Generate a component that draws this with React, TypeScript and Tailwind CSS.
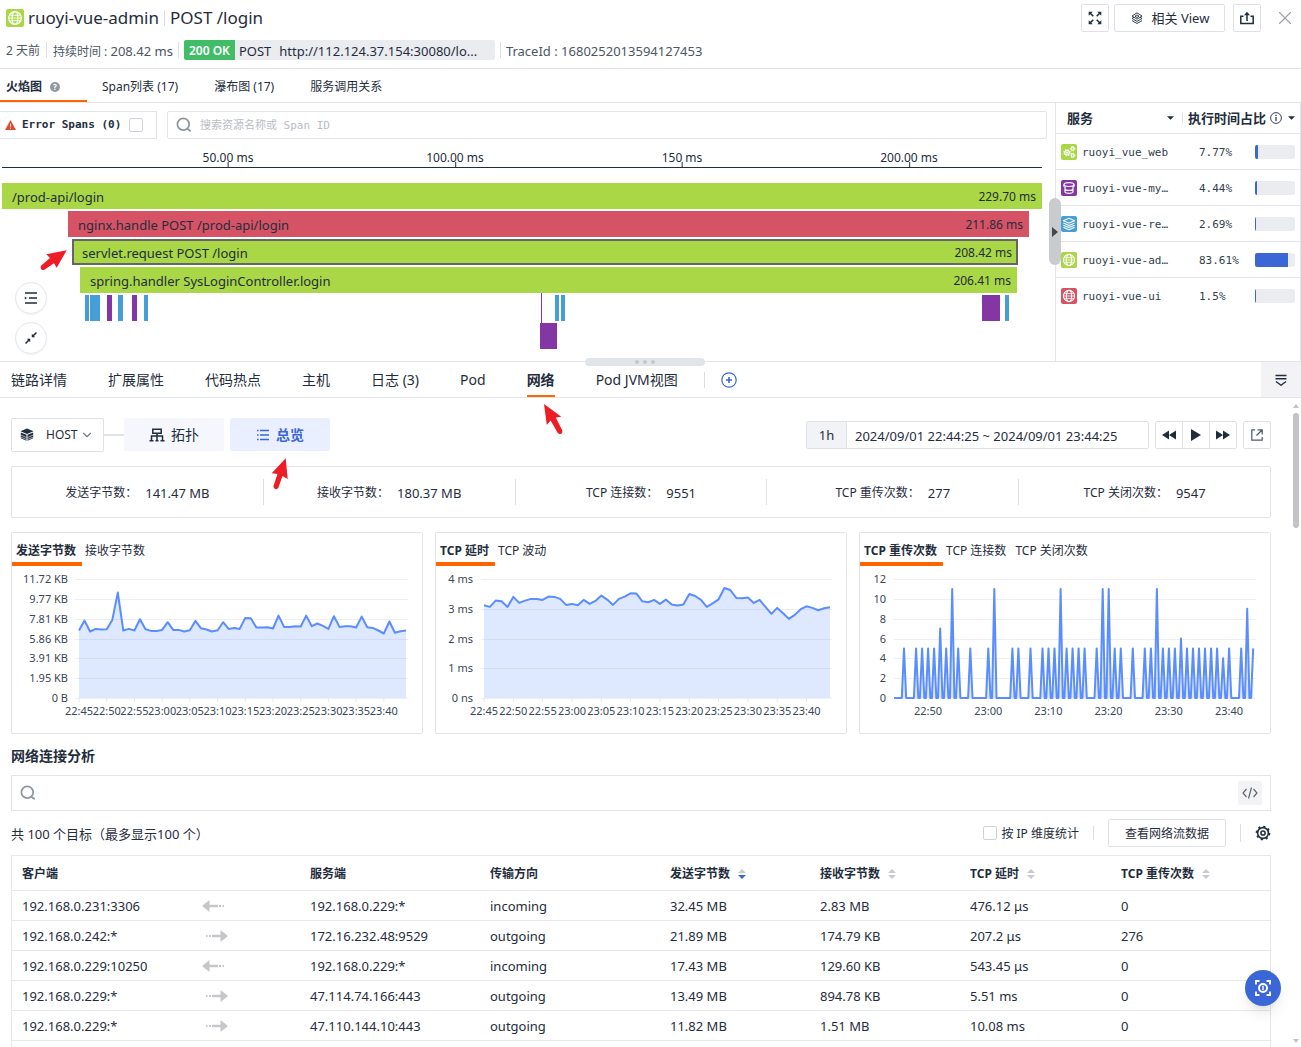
import React from "react";
import { ChevronDown, X } from "lucide-react";

type IconProps = { className?: string };

/* ---------- icons ---------- */

function GlobeIcon({ className }: IconProps) {
  return (
    <svg viewBox="0 0 16 16" className={className} fill="none" stroke="#fff" strokeWidth="1.1" aria-hidden="true">
      <circle cx="8" cy="8" r="5.6" />
      <ellipse cx="8" cy="8" rx="2.6" ry="5.6" />
      <path d="M3 5.600h10M3 10.400h10M2.400 8h11.200" strokeWidth="0.8" />
    </svg>
  );
}

function GearsIcon({ className }: IconProps) {
  return (
    <svg viewBox="0 0 16 16" className={className} fill="none" stroke="#fff" aria-hidden="true">
      <circle cx="6" cy="8.600" r="2.300" strokeWidth="1.300" />
      <circle cx="6" cy="8.600" r="3.300" strokeWidth="1" strokeDasharray="1.300 1.300" />
      <circle cx="6" cy="8.600" r="0.700" fill="#fff" />
      <circle cx="11.600" cy="4.700" r="1.500" strokeWidth="1.200" />
      <circle cx="11.600" cy="4.700" r="2.300" strokeWidth="0.700" strokeDasharray="1 1" />
      <circle cx="11.700" cy="11.400" r="1.500" strokeWidth="1.200" />
      <circle cx="11.700" cy="11.400" r="2.300" strokeWidth="0.700" strokeDasharray="1 1" />
    </svg>
  );
}

function DatabaseIcon({ className }: IconProps) {
  return (
    <svg viewBox="0 0 16 16" className={className} fill="none" stroke="#fff" strokeWidth="1.2" aria-hidden="true">
      <ellipse cx="8" cy="4.600" rx="5" ry="1.900" />
      <path d="M4 6.200v5.600c0 .9 1.800 1.500 4 1.500s4-.6 4-1.500V6.200M4 9c0 .8 1.800 1.400 4 1.400S12 9.800 12 9" />
      <path d="M3 4.600v2.200M13 4.600v2.200" />
    </svg>
  );
}

function LayersIcon({ className }: IconProps) {
  return (
    <svg viewBox="0 0 16 16" className={className} fill="none" stroke="#fff" strokeWidth="1.100" strokeLinejoin="round" aria-hidden="true">
      <path d="M8 2.300l5.600 2.400L8 7.100 2.400 4.700z" />
      <path d="M2.400 7.100L8 9.500l5.600-2.400M2.400 9.200L8 11.600l5.600-2.400M2.400 11.300L8 13.700l5.600-2.400" />
    </svg>
  );
}

function SearchIcon({ className }: IconProps) {
  return (
    <svg viewBox="0 0 16 16" className={className} fill="none" stroke="currentColor" strokeWidth="1.700" strokeLinecap="round" aria-hidden="true">
      <circle cx="7.300" cy="7.300" r="5.900" />
      <path d="M11.600 12l2.600 1.800" />
    </svg>
  );
}

function ExpandIcon() {
  return (
    <svg viewBox="0 0 14 14" className="size-3.5" fill="none" stroke="currentColor" strokeWidth="1.500" aria-hidden="true">
      <path d="M1.500 1.500L5.300 5.300M12.500 1.500L8.700 5.300M1.500 12.500L5.300 8.700M12.500 12.500L8.700 8.700" />
      <path d="M.7 4.700v-4h4zM13.300 4.700v-4h-4zM.7 9.300v4h4zM13.300 9.300v4h-4z" fill="currentColor" stroke="none" />
    </svg>
  );
}

function ViewIcon() {
  return (
    <svg viewBox="0 0 14 14" className="size-3.5" fill="none" stroke="currentColor" strokeWidth="0.900" strokeLinejoin="round" aria-hidden="true">
      <path d="M7 1.800l5 3.200-5 3.200L2 5zM4 6.200L2 7.400l5 3 5-3-2-1.200M2 9.500l5 3 5-3M5 5.200l2-1.300 2 1.300L7 6.500z" />
    </svg>
  );
}

function ShareIcon() {
  return (
    <svg viewBox="0 0 14 14" className="size-3.5" fill="none" stroke="currentColor" strokeWidth="1.500" aria-hidden="true">
      <path d="M3.500 5.200H.8v7.400h12.400V5.200h-2.700M7 10V2" />
      <path d="M4 4.200L7 .8l3 3.400z" fill="currentColor" stroke="none" />
    </svg>
  );
}

function CubeIcon() {
  return (
    <svg viewBox="0 0 14 14" className="size-3.5 shrink-0" aria-hidden="true">
      <path d="M7 .5l6.500 2.700L7 5.900.5 3.200z" fill="#1f2d3d" />
      <path d="M.8 4.400l5.700 2.400v6L.8 10.300zM13.200 4.400L7.500 6.800v6l5.700-2.500z" fill="#1f2d3d" />
      <path d="M.8 7l5.700 2.500M13.200 7L7.500 9.500M.8 9.100l5.700 2.400M13.200 9.100l-5.700 2.400" fill="none" stroke="#fff" strokeWidth="0.600" />
    </svg>
  );
}

function TopologyIcon() {
  return (
    <svg viewBox="0 0 16 14" className="h-3.5 w-4" fill="none" stroke="currentColor" strokeWidth="1.500" aria-hidden="true">
      <path d="M3.800 1.200h8.400v4H3.800zM8 5.200v7.300M2.500 12.500V8h11v4.500" />
      <path d="M.5 12.800h4M11.500 12.800h4M6.500 12.800h3" />
    </svg>
  );
}

function ListIcon() {
  return (
    <svg viewBox="0 0 14 14" className="size-3.5" fill="none" stroke="currentColor" strokeWidth="1.400" aria-hidden="true">
      <path d="M4 2.500h9M4 7h9M4 11.500h9M1 2.500h1.600M1 7h1.600M1 11.500h1.600" />
    </svg>
  );
}

function GearIcon() {
  return (
    <svg viewBox="0 0 16 16" className="size-4" fill="none" stroke="currentColor" aria-hidden="true">
      <circle cx="8" cy="8" r="5.400" strokeWidth="1.600" />
      <circle cx="8" cy="8" r="6.600" strokeWidth="1.500" strokeDasharray="2.200 2.980" />
      <circle cx="8" cy="8" r="2.100" strokeWidth="1.500" />
    </svg>
  );
}

function FocusIcon() {
  return (
    <svg viewBox="0 0 18 18" className="size-[18px]" fill="none" stroke="#fff" strokeWidth="1.800" aria-hidden="true">
      <path d="M2 5.500V2h3.500M12.500 2H16v3.500M16 12.500V16h-3.500M5.500 16H2v-3.500" />
      <circle cx="9" cy="9" r="4" strokeWidth="2" />
      <path d="M9 6.800v4.400" strokeWidth="1.400" />
    </svg>
  );
}

function FlowArrow({ incoming }: { incoming: boolean }) {
  return incoming ? (
    <svg viewBox="0 0 24 12" className="h-3 w-6" fill="#c6c7ca" role="img" aria-label="incoming">
      <path d="M0 6l7.500-6v4.800H16v2.400H7.500V12zM17 5h2v2h-2zM20.500 5H22v2h-1.500z" />
    </svg>
  ) : (
    <svg viewBox="0 0 24 12" className="ml-1 h-3 w-6" fill="#c6c7ca" role="img" aria-label="outgoing">
      <path d="M22 6l-7.500-6v4.800H6v2.400h8.500V12zM3 5h2v2H3zM0 5h1.500v2H0z" />
    </svg>
  );
}

/* ---------- data ---------- */

type Span = { row: number; start: number; width: number; tone: string; label?: string; time?: string };

/* start and width are in units of a 1040 wide time line */
const SPANS: Span[] = [
  { row: 0, start: 0, width: 1040, tone: "bg-[#aad745] pl-2.5 pr-1.5", label: "/prod-api/login", time: "229.70 ms" },
  { row: 1, start: 66, width: 961, tone: "bg-[#d65365] pl-2.5 pr-1.5", label: "nginx.handle POST /prod-api/login", time: "211.86 ms" },
  { row: 2, start: 70, width: 946, tone: "border-2 border-[#666] bg-[#aad745] pl-2 pr-1", label: "servlet.request POST /login", time: "208.42 ms" },
  { row: 3, start: 78, width: 937, tone: "bg-[#aad745] pl-2.5 pr-1.5", label: "spring.handler SysLoginController.login", time: "206.41 ms" },
  { row: 4, start: 83, width: 4, tone: "bg-[#459fd6]" },
  { row: 4, start: 88, width: 10, tone: "bg-[#459fd6]" },
  { row: 4, start: 105, width: 5, tone: "bg-[#8436a5]" },
  { row: 4, start: 116, width: 5, tone: "bg-[#459fd6]" },
  { row: 4, start: 130, width: 5, tone: "bg-[#8436a5]" },
  { row: 4, start: 142, width: 4, tone: "bg-[#459fd6]" },
  { row: 4, start: 539, width: 1, tone: "bg-[#8436a5] shadow-[0_2px_0_#8436a5,0_-2px_0_#8436a5]" },
  { row: 4, start: 553, width: 4, tone: "bg-[#459fd6]" },
  { row: 4, start: 559, width: 4, tone: "bg-[#459fd6]" },
  { row: 4, start: 980, width: 18, tone: "bg-[#8436a5]" },
  { row: 4, start: 1003, width: 4, tone: "bg-[#459fd6]" },
  { row: 5, start: 538, width: 17, tone: "bg-[#8436a5]" },
];

const AXIS = [
  { at: 226, label: "50.00 ms" },
  { at: 453, label: "100.00 ms" },
  { at: 680, label: "150 ms" },
  { at: 907, label: "200.00 ms" },
];

const SERVICES = [
  { name: "ruoyi_vue_web", pct: 7.77, tone: "bg-[#aad745]", Icon: GearsIcon },
  { name: "ruoyi-vue-my…", pct: 4.44, tone: "bg-[#8436a5]", Icon: DatabaseIcon },
  { name: "ruoyi-vue-re…", pct: 2.69, tone: "bg-[#459fd6]", Icon: LayersIcon },
  { name: "ruoyi-vue-ad…", pct: 83.61, tone: "bg-[#aad745]", Icon: GlobeIcon },
  { name: "ruoyi-vue-ui", pct: 1.5, tone: "bg-[#d65365]", Icon: GlobeIcon },
];

const STATS = [
  ["发送字节数：", "141.47 MB"],
  ["接收字节数：", "180.37 MB"],
  ["TCP 连接数：", "9551"],
  ["TCP 重传次数：", "277"],
  ["TCP 关闭次数：", "9547"],
];

/* one sample per minute, on a scale where FULL is the top grid line */
const FULL = 358;
const SENT = [
  203, 233, 200, 208, 206, 207, 235, 317, 203, 208, 203, 237, 207, 202, 202, 205, 228, 205, 205, 200, 204, 232, 210, 206,
  200, 204, 228, 208, 211, 208, 241, 240, 212, 212, 213, 209, 248, 214, 214, 216, 215, 248, 216, 224, 217, 208, 246, 214,
  216, 216, 212, 245, 213, 211, 203, 194, 230, 196, 201, 203,
];
const DELAY = [
  279, 274, 293, 291, 274, 304, 286, 293, 298, 298, 295, 305, 304, 298, 280, 283, 279, 295, 283, 292, 308, 296, 280, 298,
  305, 315, 314, 291, 288, 295, 283, 296, 281, 278, 281, 313, 307, 295, 274, 285, 297, 331, 325, 301, 300, 302, 286, 295,
  274, 253, 271, 255, 238, 250, 267, 276, 271, 264, 270, 273,
];
/* retransmissions per minute from 22:44 */
const RETRANS = [
  0, 0, 5, 0, 5, 5, 5, 5, 7, 5, 11, 5, 0, 5, 0, 0, 5, 11, 0, 0, 5, 5, 0, 5, 0, 5, 5, 5, 11, 5, 5, 5, 5, 0, 5, 11, 11, 5,
  5, 0, 5, 0, 5, 5, 11, 5, 5, 5, 6, 5, 5, 5, 5, 5, 5, 4, 5, 0, 5, 9, 5,
];

const TIMES = ["22:45", "22:50", "22:55", "23:00", "23:05", "23:10", "23:15", "23:20", "23:25", "23:30", "23:35", "23:40"];

const ROWS = [
  ["192.168.0.231:3306", "192.168.0.229:*", "incoming", "32.45 MB", "2.83 MB", "476.12 μs", "0"],
  ["192.168.0.242:*", "172.16.232.48:9529", "outgoing", "21.89 MB", "174.79 KB", "207.2 μs", "276"],
  ["192.168.0.229:10250", "192.168.0.229:*", "incoming", "17.43 MB", "129.60 KB", "543.45 μs", "0"],
  ["192.168.0.229:*", "47.114.74.166:443", "outgoing", "13.49 MB", "894.78 KB", "5.51 ms", "0"],
  ["192.168.0.229:*", "47.110.144.10:443", "outgoing", "11.82 MB", "1.51 MB", "10.08 ms", "0"],
];

/* ---------- charts ---------- */

const TOP = 13;
const BOTTOM = 132;

type ChartProps = {
  name: string;
  tabs: string[];
  levels: string[];
  labelEnd: number;
  gridStart: number;
  ticks: { x: number; label: string }[];
  points: [number, number][];
};

function ChartCard({ name, tabs, levels, labelEnd, gridStart, ticks, points }: ChartProps) {
  const line = points.map(([x, y]) => `${x.toFixed(1)},${y.toFixed(1)}`).join(" ");
  const first = points[0][0];
  const last = points[points.length - 1][0];
  const step = (BOTTOM - TOP) / (levels.length - 1);
  return (
    <section className="min-w-0 flex-1 rounded-xs border border-[#e2e4ea]" aria-label={name}>
      <div className="flex h-[33px]">
        {tabs.map((t, i) => (
          <button
            key={t}
            className={
              i === 0
                ? "border-b-4 border-[#ff6600] pt-1.5 pr-1.5 pl-1 text-[12px] font-bold whitespace-nowrap"
                : "border-b-4 border-transparent pt-1.5 pr-1.5 pl-[3px] text-[12px] whitespace-nowrap"
            }
          >
            {t}
          </button>
        ))}
      </div>
      <svg viewBox="0 0 410 167" className="block w-full" role="img" aria-label={name}>
        {levels.map((l, i) => {
          const y = Math.round(TOP + i * step) + 0.5;
          return (
            <g key={l}>
              <line x1={gridStart} x2="396" y1={y} y2={y} stroke="#eeeff2" />
              <text x={labelEnd} y={y + 3} textAnchor="end" fontSize="11" fill="#3b4757">
                {l}
              </text>
            </g>
          );
        })}
        <polygon points={`${first},${BOTTOM} ${line} ${last},${BOTTOM}`} fill="#5a8dff" fillOpacity="0.2" />
        <polyline points={line} fill="none" stroke="#5a8dff" strokeWidth="2" strokeLinejoin="round" />
        {ticks.map((t) => (
          <g key={t.label}>
            <line x1={t.x} x2={t.x} y1={BOTTOM} y2={BOTTOM + 4} stroke="#e6e8ec" />
            <text x={t.x} y="149" textAnchor="middle" fontSize="11" fill="#3b4757">
              {t.label}
            </text>
          </g>
        ))}
      </svg>
    </section>
  );
}

function areaPoints(data: number[], x0: number, x1: number): [number, number][] {
  return data.map((v, i) => [
    x0 + ((x1 - x0) * i) / (data.length - 1),
    BOTTOM - (v / FULL) * (BOTTOM - TOP),
  ]);
}

function areaTicks(x0: number, x1: number) {
  return TIMES.map((label, i) => ({ label, x: x0 + ((x1 - x0) * i * 5) / 59 }));
}

function spikePoints(): [number, number][] {
  const pts: [number, number][] = [[34, BOTTOM]];
  RETRANS.forEach((v, i) => {
    if (!v) return;
    const x = 32 + i * 6.02;
    pts.push([x - 2.2, BOTTOM], [x, BOTTOM - (v / 12) * (BOTTOM - TOP)]);
    if (i < RETRANS.length - 1) pts.push([x + 2.2, BOTTOM]);
  });
  return pts;
}

const SPIKE_TICKS = ["22:50", "23:00", "23:10", "23:20", "23:30", "23:40"].map((label, i) => ({
  label,
  x: 68 + i * 60.2,
}));

/* ---------- small parts ---------- */

function Divider({ className = "" }: IconProps) {
  return <span className={`w-px shrink-0 bg-[#dcdfe5] ${className}`} />;
}

function Caret() {
  return (
    <svg viewBox="0 0 8 4" className="h-1 w-[7px]" fill="#1f2d3d" aria-hidden="true">
      <path d="M0 0h8L4 4z" />
    </svg>
  );
}

function Sorter({ active }: { active?: boolean }) {
  return (
    <svg viewBox="0 0 8 12" className="h-3 w-2" aria-hidden="true">
      <path d="M0 5h8L4 1z" fill="#c6cad1" />
      <path d="M0 7h8l-4 4z" fill={active ? "#3a66d6" : "#c6cad1"} />
    </svg>
  );
}

const box = "flex items-center justify-center rounded-xs border border-[#dfe1e7] bg-white";

/* ---------- sections ---------- */

function Header() {
  return (
    <header className="flex h-[69px] shrink-0 justify-between border-b border-[#e2e4ea] pl-1.5">
      <div>
        <h1 className="flex h-9 items-center text-[17px]">
          <span className="mr-1 rounded-xs bg-[#aad745]">
            <GlobeIcon className="size-[18px]" />
          </span>
          ruoyi-vue-admin
          <Divider className="mx-[5px] h-4" />
          POST /login
        </h1>
        <div className="flex h-7 items-center text-[12px] text-[#4c5665]">
          <span className="pt-0.5">2 天前</span>
          <Divider className="mx-1.5 h-4" />
          <span className="pt-0.5">
            持续时间 : <span className="text-[13px]">208.42 ms</span>
          </span>
          <Divider className="mx-[5px] h-4" />
          <span className="flex h-5 w-[51px] items-center justify-center rounded-l-xs bg-[#40bd66] pt-0.5 text-[12px] font-semibold text-white">
            200 OK
          </span>
          <span className="flex h-5 w-[260px] items-center gap-2 rounded-r-xs bg-[#ebecf0] px-1 pt-0.5 text-[13px] text-[#1f2d3d]">
            <span>POST</span>
            <span>http://112.124.37.154:30080/lo...</span>
          </span>
          <Divider className="mx-[5px] h-4" />
          <span className="pt-0.5 text-[13px]">TraceId : 1680252013594127453</span>
        </div>
      </div>
      <div className="flex items-center self-start pt-1">
        <button className={`${box} size-7`} aria-label="全屏">
          <ExpandIcon />
        </button>
        <button className={`${box} ml-[5px] h-7 w-[111px] gap-2 text-[13px]`}>
          <ViewIcon />
          相关 View
        </button>
        <button className={`${box} ml-2 size-7`} aria-label="分享">
          <ShareIcon />
        </button>
        <button className="mr-[5px] ml-[13px] text-[#9ba1ab]" aria-label="关闭">
          <X className="size-[22px]" strokeWidth={1.2} />
        </button>
      </div>
    </header>
  );
}

function TopTabs() {
  return (
    <nav className="flex h-[34px] shrink-0 border-b border-[#e2e4ea] text-[12px]">
      <button className="flex w-[87px] items-center gap-2 border-b-2 border-[#ff6600] pt-1 pl-1.5 font-bold">
        火焰图
        <span className="flex size-2.5 items-center justify-center rounded-full bg-[#9298a1] text-[8px] leading-none text-white">?</span>
      </button>
      <button className="ml-[15px] pt-0.5">Span列表 (17)</button>
      <button className="ml-9 pt-0.5">瀑布图 (17)</button>
      <button className="ml-9 pt-0.5">服务调用关系</button>
    </nav>
  );
}

function FlamePanel() {
  return (
    <div className="relative min-w-0 flex-1">
      <div className="flex pt-2 pr-2 font-['DejaVu_Sans_Mono','Noto_Sans_CJK_SC',monospace] text-[11px]">
        <label className="flex h-7 w-[157px] items-center border border-l-0 border-[#e2e4ea] pl-[5px] font-bold">
          <svg viewBox="0 0 12 11" className="mr-1.5 h-2.5 w-[11px]" aria-hidden="true">
            <path d="M6 0l6 11H0z" fill="#e5482d" />
            <path d="M6 4v3.500M6 8.500v1.200" stroke="#fff" strokeWidth="1.200" />
          </svg>
          Error Spans (0)
          <input type="checkbox" className="ml-2 size-3.5 appearance-none rounded-xs border border-[#cfd2d9] bg-white" />
        </label>
        <label className="ml-2.5 flex h-7 flex-1 items-center rounded-xs border border-[#e2e4ea] pl-2">
          <SearchIcon className="mr-2 size-4 text-[#8f959e]" />
          <input className="flex-1 pt-0.5 outline-none placeholder:text-[#b9bdc4]" placeholder="搜索资源名称或 Span ID" aria-label="搜索资源名称或 Span ID" />
        </label>
      </div>

      <div className="ml-0.5 mr-[13px]">
        <div className="relative h-[29px] border-b border-[#1f2d3d]">
          {AXIS.map((a) => (
            <div key={a.label} className="absolute bottom-0 flex h-[19px] -translate-x-1/2 items-start text-[12px] leading-5" style={{ left: `${a.at / 10.4}%` }}>
              {a.label}
              <span className="absolute bottom-0 left-1/2 h-[5px] w-px bg-[#1f2d3d]" />
            </div>
          ))}
        </div>
        <div className="relative mt-[15px] h-[178px]">
          {SPANS.map((s, i) => (
            <div
              key={i}
              className={`absolute flex h-[26px] items-center justify-between text-[13px] whitespace-nowrap ${s.tone}`}
              style={{ left: `${s.start / 10.4}%`, width: `${s.width / 10.4}%`, top: s.row * 28 }}
            >
              {s.label && <span className="pt-0.5">{s.label}</span>}
              {s.time && <span className="pt-0.5 text-[12px]">{s.time}</span>}
            </div>
          ))}
        </div>
      </div>

      <svg viewBox="40 249 28 22" className="absolute left-10 top-[146px] h-[22px] w-7" fill="#ee1c25" aria-hidden="true">
        <path d="M66.700 250.300L46.300 254.300L50 258L41.300 265.500Q40 267.500 41.300 269.200Q42.500 270.600 44.300 269.800L54 263.300L56.700 267.700Z" />
      </svg>

      <button className="absolute left-[15px] top-[179px] flex size-8 items-center justify-center rounded-full border border-[#e6e7f0] bg-white shadow-xs" aria-label="排列">
        <svg viewBox="0 0 14 12" className="h-3 w-3.5" fill="none" stroke="#1f2d3d" strokeWidth="1.500" aria-hidden="true">
          <path d="M1 1h12M5 6h8M1 11h12" />
          <path d="M.8 4.500v3L3 6z" fill="#1f2d3d" stroke="none" />
        </svg>
      </button>
      <button className="absolute left-[15px] top-[219px] flex size-8 items-center justify-center rounded-full border border-[#e6e7f0] bg-white shadow-xs" aria-label="收起">
        <svg viewBox="0 0 12 12" className="size-3" fill="none" stroke="#1f2d3d" strokeWidth="1.500" aria-hidden="true">
          <path d="M11.500.5L8 4M.5 11.500L4 8" />
          <path d="M6.800 1.800v3.400h3.400zM5.200 10.200V6.800H1.800z" fill="#1f2d3d" stroke="none" />
        </svg>
      </button>
    </div>
  );
}

function ServicePanel() {
  return (
    <aside className="relative w-[246px] shrink-0 border-x border-[#e2e4ea]">
      <div className="flex h-[31px] items-center border-b border-[#e2e4ea] pl-[11px] text-[13px] font-bold">
        <button className="flex w-[107px] items-center justify-between text-left">
          服务
          <Caret />
        </button>
        <Divider className="ml-2 mr-[5px] h-2.5" />
        <button className="flex items-center whitespace-nowrap">
          执行时间占比
          <svg viewBox="0 0 12 12" className="ml-1 size-3" fill="none" stroke="#1f2d3d" strokeWidth="0.900" aria-hidden="true">
            <circle cx="6" cy="6" r="5.400" />
            <path d="M6 5v4M6 2.800v1.200" strokeWidth="1.200" />
          </svg>
          <span className="ml-1.5">
            <Caret />
          </span>
        </button>
      </div>
      <ul className="font-['DejaVu_Sans_Mono',monospace] text-[11px] text-[#323e4d]">
        {SERVICES.map(({ name, pct, tone, Icon }) => (
          <li key={name} className="flex h-9 items-center border-b border-[#e2e4ea] pl-[5px] last:border-0">
            <span className={`mr-[5px] rounded-xs ${tone}`}>
              <Icon className="size-4" />
            </span>
            <span className="w-[117px] pt-0.5">{name}</span>
            <span className="w-14 pt-0.5">{pct}%</span>
            <span className="flex h-3.5 w-10 overflow-hidden rounded-xs bg-[#ebecf0]">
              <span className="bg-[#3a66d6]" style={{ width: `${pct}%` }} />
            </span>
          </li>
        ))}
      </ul>
      <button className="absolute -left-[7px] top-[95px] flex h-[67px] w-3 items-center justify-center rounded-full bg-[#c9cbce]" aria-label="收起面板">
        <svg viewBox="0 0 6 10" className="h-2.5 w-1.5" fill="#43484f" aria-hidden="true">
          <path d="M0 0l6 5-6 5z" />
        </svg>
      </button>
    </aside>
  );
}

const DETAIL_TABS = ["链路详情", "扩展属性", "代码热点", "主机", "日志 (3)", "Pod", "网络", "Pod JVM视图"];

function DetailTabs() {
  return (
    <nav className="relative flex h-[37px] shrink-0 items-stretch border-b border-t border-[#e2e4ea] pl-[11px]">
      <div className="flex gap-[41px] text-[14px]">
        {DETAIL_TABS.map((t) =>
          t === "网络" ? (
            <button key={t} className="relative border-b-2 border-[#ff6600] pt-0.5 font-bold">
              {t}
              <svg viewBox="543 403 20 32" className="absolute left-4 top-[41px] h-8 w-5" fill="#ee1c25" aria-hidden="true">
                <path d="M544 404L561.300 416.700L555.800 417.500L562.300 430.500Q562.900 432.700 561.300 433.700Q559.500 434.700 557.800 433L550.600 420.600L546.800 425Z" />
              </svg>
            </button>
          ) : (
            <button key={t} className="border-b-2 border-transparent pt-0.5">
              {t}
            </button>
          ),
        )}
      </div>
      <Divider className="mr-4 ml-[26px] h-4 self-center" />
      <button aria-label="添加">
        <svg viewBox="0 0 16 16" className="size-4" fill="none" stroke="#3a66d6" strokeWidth="1.200" aria-hidden="true">
          <circle cx="8" cy="8" r="7.200" />
          <path d="M8 5v6M5 8h6" strokeWidth="1.600" />
        </svg>
      </button>
      <button className="ml-auto flex w-10 items-center justify-center bg-[#f3f3f5]" aria-label="折叠">
        <svg viewBox="0 0 12 12" className="size-3" fill="none" stroke="#1f2d3d" strokeWidth="1.400" aria-hidden="true">
          <path d="M.5 1.500h11M.5 4.800h11M1 7.500l5 3.700 5-3.700" />
        </svg>
      </button>
      <div className="absolute -top-1 left-[45%] flex h-2 w-[120px] items-center justify-center gap-1 rounded-full bg-[#e1e4e8]">
        <span className="size-1 rounded-full bg-[#c3c6ca]" />
        <span className="size-1 rounded-full bg-[#c3c6ca]" />
        <span className="size-1 rounded-full bg-[#c3c6ca]" />
      </div>
    </nav>
  );
}

function Toolbar() {
  return (
    <div className="flex items-center">
      <label className="relative flex h-[34px] w-[93px] items-center rounded-xs border border-[#dfe1e7] pl-2">
        <CubeIcon />
        <select className="ml-3 w-full appearance-none bg-transparent text-[12px] outline-none" aria-label="类型">
          <option>HOST</option>
        </select>
        <ChevronDown className="pointer-events-none absolute right-[9px] size-3.5 text-[#6f7f8a]" strokeWidth={2} />
      </label>
      <span className="h-0.5 w-5 bg-[#dfe3e8]" />
      <button className="flex h-[33px] w-[100px] items-center justify-center gap-1.5 self-start rounded-xs bg-[#f5f7fd] text-[14px]">
        <TopologyIcon />
        拓扑
      </button>
      <div className="relative ml-1.5 self-start">
        <button className="flex h-[33px] w-[100px] items-center justify-center gap-1.5 rounded-xs bg-[#e9effe] text-[14px] font-semibold text-[#3a66d6]">
          <ListIcon />
          总览
        </button>
        <svg viewBox="271 457 18 33" className="absolute left-[41px] top-[39px] h-[33px] w-[18px]" fill="#ee1c25" aria-hidden="true">
          <path d="M285.700 458.300L271.700 473.300L277.500 474L273.500 486Q273.300 488.300 275.300 489Q277.200 489.600 278.300 488L282.500 476L287.700 479Z" />
        </svg>
      </div>

      <div className="ml-auto flex h-7 w-[343px] rounded-xs border border-[#dfe1e7] text-[13px]">
        <button className="w-10 border-r border-[#dfe1e7] bg-[#f2f3f7]">1h</button>
        <input
          readOnly
          aria-label="时间范围"
          value="2024/09/01 22:44:25 ~ 2024/09/01 23:44:25"
          className="min-w-0 flex-1 px-2 pt-px outline-none"
        />
      </div>
      <div className="ml-1.5 flex h-7 divide-x divide-[#dfe1e7] rounded-xs border border-[#dfe1e7]">
        <button className="flex w-[27px] items-center justify-center" aria-label="后退">
          <svg viewBox="0 0 14 10" className="h-2.5 w-3.5" fill="#1f2d3d"><path d="M7 .5v9L0 5zM14 .5v9L7 5z" /></svg>
        </button>
        <button className="flex w-[27px] items-center justify-center" aria-label="播放">
          <svg viewBox="0 0 10 12" className="h-3 w-2.5" fill="#1f2d3d"><path d="M0 0l10 6-10 6z" /></svg>
        </button>
        <button className="flex w-[26px] items-center justify-center" aria-label="前进">
          <svg viewBox="0 0 14 10" className="h-2.5 w-3.5" fill="#1f2d3d"><path d="M0 .5L7 5 0 9.500zM7 .5L14 5 7 9.500z" /></svg>
        </button>
      </div>
      <button className={`${box} ml-1.5 size-7`} aria-label="新窗口打开">
        <svg viewBox="0 0 12 12" className="size-3" fill="none" stroke="#4d5b69" strokeWidth="1.200" aria-hidden="true">
          <path d="M4 .8H.8v10.400h10.400V8M6.500 .8h4.700v4.700M11 1L5.500 6.500" />
        </svg>
      </button>
    </div>
  );
}

function ConnectionTable() {
  const th = "px-2.5 pt-0.5 text-left font-bold";
  return (
    <div className="mt-2 border border-[#e6e8ec] text-[12px]">
      <table className="w-full table-fixed border-collapse">
        <colgroup>
          <col className="w-[180px]" />
          <col className="w-[108px]" />
          <col className="w-[180px]" />
          <col className="w-[180px]" />
          <col className="w-[150px]" />
          <col className="w-[150px]" />
          <col className="w-[151px]" />
          <col />
        </colgroup>
        <thead>
          <tr className="h-[34px] border-b border-[#e6e8ec]">
            <th className={th}>客户端</th>
            <th aria-label="方向" />
            <th className={th}>服务端</th>
            <th className={th}>传输方向</th>
            {["发送字节数", "接收字节数", "TCP 延时", "TCP 重传次数"].map((h, i) => (
              <th key={h} className={th}>
                <button className="flex items-center gap-2 font-bold whitespace-nowrap">
                  {h}
                  <Sorter active={i === 0} />
                </button>
              </th>
            ))}
          </tr>
        </thead>
        <tbody className="text-[13px]">
          {ROWS.map(([client, ...rest], i) => (
            <tr key={i} className="h-[30px] border-b border-[#e6e8ec]">
              <td className="px-2.5 pt-0.5">{client}</td>
              <td className="px-2.5 pt-0.5">
                <FlowArrow incoming={rest[1] === "incoming"} />
              </td>
              {rest.map((c, j) => (
                <td key={j} className="px-2.5 pt-0.5">
                  {c}
                </td>
              ))}
            </tr>
          ))}
          <tr className="h-[30px]">
            <td colSpan={8} />
          </tr>
        </tbody>
      </table>
    </div>
  );
}

function NetworkView() {
  return (
    <main className="relative min-h-0 flex-1 overflow-hidden">
      <div className="pl-[11px] pr-[30px] pt-5">
        <Toolbar />

        <dl className="mt-3.5 flex h-[52px] items-center divide-x divide-[#dcdfe5] rounded-xs border border-[#e2e4ea] text-[12px]">
          {STATS.map(([k, v]) => (
            <div key={k} className="flex h-[26px] flex-1 items-center justify-center gap-2 pt-0.5">
              <dt>{k}</dt>
              <dd className="text-[13px]">{v}</dd>
            </div>
          ))}
        </dl>

        <div className="mt-3.5 flex gap-3">
          <ChartCard
            name="发送字节数"
            tabs={["发送字节数", "接收字节数"]}
            levels={["11.72 KB", "9.77 KB", "7.81 KB", "5.86 KB", "3.91 KB", "1.95 KB", "0 B"]}
            labelEnd={56}
            gridStart={63}
            ticks={areaTicks(67, 394)}
            points={areaPoints(SENT, 67, 394)}
          />
          <ChartCard
            name="TCP 延时"
            tabs={["TCP 延时", "TCP 波动"]}
            levels={["4 ms", "3 ms", "2 ms", "1 ms", "0 ns"]}
            labelEnd={37}
            gridStart={45}
            ticks={areaTicks(48, 394)}
            points={areaPoints(DELAY, 48, 394)}
          />
          <ChartCard
            name="TCP 重传次数"
            tabs={["TCP 重传次数", "TCP 连接数", "TCP 关闭次数"]}
            levels={["12", "10", "8", "6", "4", "2", "0"]}
            labelEnd={26}
            gridStart={34}
            ticks={SPIKE_TICKS}
            points={spikePoints()}
          />
        </div>

        <h2 className="mt-2.5 text-[14px] leading-6 font-bold">网络连接分析</h2>
        <label className="mt-[7px] flex h-9 items-center border border-[#e2e4ea] pl-2 pr-2">
          <SearchIcon className="size-4 text-[#8f959e]" />
          <input className="ml-2 h-full flex-1 outline-none" aria-label="搜索网络连接" />
          <button className="flex size-6 items-center justify-center rounded-xs bg-[#f3f3f5]" aria-label="代码模式">
            <svg viewBox="0 0 16 12" className="h-3 w-4" fill="none" stroke="#5d6672" strokeWidth="1.200" aria-hidden="true">
              <path d="M4.500 2L1 6l3.500 4M11.500 2L15 6l-3.500 4M9.500.5l-3 11" />
            </svg>
          </button>
        </label>

        <div className="mt-2 flex h-7 items-center text-[12px]">
          <p className="pt-0.5 text-[13px]">共 100 个目标（最多显示100 个）</p>
          <label className="ml-auto flex items-center gap-1">
            <input type="checkbox" className="size-3.5 appearance-none rounded-xs border border-[#cfd2d9] bg-white" />
            <span className="pt-0.5">按 IP 维度统计</span>
          </label>
          <Divider className="mx-3.5 h-3.5" />
          <button className={`${box} h-7 w-[118px] pt-0.5 text-[12px]`}>查看网络流数据</button>
          <Divider className="mx-3.5 h-[18px]" />
          <button aria-label="设置">
            <GearIcon />
          </button>
        </div>

        <ConnectionTable />
      </div>

      {/* scroll indicator */}
      <div className="absolute inset-y-0 right-0.5 flex w-1.5 flex-col items-center pt-1.5 pb-1">
        <svg viewBox="0 0 6 4" className="h-1 w-1.5 shrink-0" fill="#c1c3c6"><path d="M0 4h6L3 0z" /></svg>
        <span className="mt-[5px] h-[115px] w-1.5 rounded-full bg-[#c1c3c6]" />
        <svg viewBox="0 0 6 4" className="mt-auto h-1 w-1.5 shrink-0" fill="#c1c3c6"><path d="M0 0h6L3 4z" /></svg>
      </div>

      <button className="absolute right-5 bottom-[41px] flex size-9 items-center justify-center rounded-full bg-[#3a66d6] shadow-lg" aria-label="智能助手">
        <FocusIcon />
      </button>
    </main>
  );
}

export default function App() {
  return (
    <div className="flex h-screen flex-col overflow-hidden bg-white font-['Noto_Sans','Noto_Sans_CJK_SC',sans-serif] leading-5 text-[#1f2d3d]">
      <Header />
      <TopTabs />
      <div className="flex shrink-0">
        <FlamePanel />
        <ServicePanel />
      </div>
      <DetailTabs />
      <NetworkView />
    </div>
  );
}
